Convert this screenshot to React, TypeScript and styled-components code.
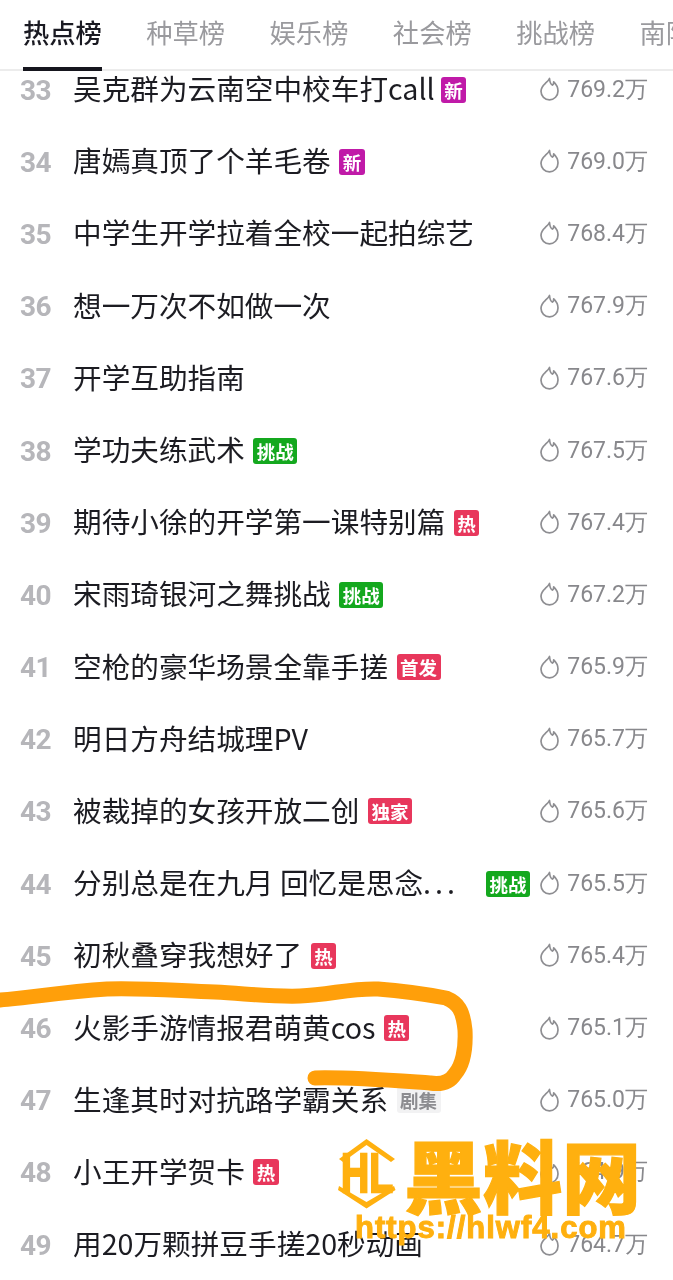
import React from "react";
import styled, { createGlobalStyle } from "styled-components";

const GlobalStyle = createGlobalStyle`
  html, body {
    margin: 0;
    padding: 0;
    background: #fff;
  }
  body {
    font-family: "Noto Sans CJK SC", "Noto Sans", sans-serif;
  }
`;

const Page = styled.div`
  position: relative;
  width: 673px;
  height: 1280px;
  overflow: hidden;
  background: #fff;
  filter: blur(0.35px);
`;

const Tabs = styled.div`
  position: relative;
  z-index: 2;
  display: flex;
  gap: 44.4px;
  height: 71px;
  padding-left: 23px;
  background: #fff;
  border-bottom: 2px solid #ececec;
  box-sizing: border-box;
  white-space: nowrap;
`;

const Tab = styled.div<{ $active?: boolean }>`
  position: relative;
  flex: none;
  padding-top: 12px;
  font-size: 26.3px;
  line-height: 40px;
  font-weight: ${(p) => (p.$active ? 500 : 400)};
  color: ${(p) => (p.$active ? "#1a1a22" : "#9a9a9e")};

  &::after {
    content: "";
    display: ${(p) => (p.$active ? "block" : "none")};
    position: absolute;
    left: 0;
    right: 0;
    bottom: -2px;
    height: 4px;
    background: #16161e;
  }
`;

const List = styled.div`
  margin-top: -19px;
`;

const Row = styled.div`
  display: flex;
  align-items: center;
  height: 72.2px;
  padding-right: 25px;
`;

const Rank = styled.div`
  flex: none;
  width: 73px;
  padding: 4px 2px 0 0;
  box-sizing: border-box;
  text-align: center;
  font-family: "Roboto", sans-serif;
  font-size: 28px;
  font-weight: 700;
  letter-spacing: -0.5px;
  color: #b6b6ba;
`;

const Title = styled.div`
  flex: none;
  font-size: 28.65px;
  line-height: 40px;
  color: #1c1c22;
  white-space: nowrap;
`;

const Dots = styled.span`
  letter-spacing: 4px;
`;

const tagColors = {
  purple: { bg: "#c01aa8", fg: "#fff" },
  red: { bg: "#e8375c", fg: "#fff" },
  green: { bg: "#14a81e", fg: "#fff" },
  gray: { bg: "#f2f2f3", fg: "#8c8c90" },
};

const Tag = styled.span<{ $color: keyof typeof tagColors; $gap?: number }>`
  flex: none;
  display: flex;
  align-items: center;
  justify-content: center;
  height: 26px;
  margin: 3px 0 0 ${(p) => p.$gap ?? 8.5}px;
  padding: 0 3.5px;
  border-radius: 3px;
  font-size: 18.5px;
  font-weight: 700;
  line-height: 26px;
  background: ${(p) => tagColors[p.$color].bg};
  color: ${(p) => tagColors[p.$color].fg};
`;

const Hot = styled.div`
  display: flex;
  align-items: center;
  margin-left: auto;
  padding-top: 2px;
  font-family: "Roboto", sans-serif;
  font-size: 23px;
  color: #88888c;
`;

const Flame = styled.svg`
  flex: none;
  width: 19px;
  height: 24px;
  margin-right: 8px;
`;

const Scribble = styled.svg`
  position: absolute;
  z-index: 3;
  left: 0;
  top: 0;
  pointer-events: none;
`;

const Watermark = styled.div`
  position: absolute;
  z-index: 4;
  left: 338px;
  top: 1134px;
  width: 310px;
  color: #ffb00f;
`;

const BrandRow = styled.div`
  display: flex;
  align-items: center;
  height: 80px;
`;

const BrandLogo = styled.svg`
  flex: none;
  width: 58px;
  height: 70px;
  margin-right: 8px;
`;

const BrandName = styled.div`
  font-size: 79px;
  line-height: 80px;
  font-weight: 900;
  white-space: nowrap;
  -webkit-text-stroke: 1.2px #ffb00f;
`;

const BrandUrl = styled.div`
  margin: -3px 0 0 17px;
  font-family: "Liberation Sans", sans-serif;
  font-size: 31px;
  line-height: 34px;
  font-weight: 700;
  letter-spacing: 1px;
  white-space: nowrap;
  -webkit-text-stroke: 1px #ffb00f;
`;

const tabs = ["热点榜", "种草榜", "娱乐榜", "社会榜", "挑战榜", "南阳榜"];

type TagKind = { text: string; color: keyof typeof tagColors; gap?: number };

const items: { rank: number; title: string; more?: boolean; hot: string; tag?: TagKind }[] = [
  { rank: 33, title: "吴克群为云南空中校车打call", hot: "769.2万", tag: { text: "新", color: "purple", gap: 6 } },
  { rank: 34, title: "唐嫣真顶了个羊毛卷", hot: "769.0万", tag: { text: "新", color: "purple" } },
  { rank: 35, title: "中学生开学拉着全校一起拍综艺", hot: "768.4万" },
  { rank: 36, title: "想一万次不如做一次", hot: "767.9万" },
  { rank: 37, title: "开学互助指南", hot: "767.6万" },
  { rank: 38, title: "学功夫练武术", hot: "767.5万", tag: { text: "挑战", color: "green" } },
  { rank: 39, title: "期待小徐的开学第一课特别篇", hot: "767.4万", tag: { text: "热", color: "red" } },
  { rank: 40, title: "宋雨琦银河之舞挑战", hot: "767.2万", tag: { text: "挑战", color: "green" } },
  { rank: 41, title: "空枪的豪华场景全靠手搓", hot: "765.9万", tag: { text: "首发", color: "red" } },
  { rank: 42, title: "明日方舟结城理PV", hot: "765.7万" },
  { rank: 43, title: "被裁掉的女孩开放二创", hot: "765.6万", tag: { text: "独家", color: "red" } },
  { rank: 44, title: "分别总是在九月 回忆是思念", more: true, hot: "765.5万", tag: { text: "挑战", color: "green", gap: 27 } },
  { rank: 45, title: "初秋叠穿我想好了", hot: "765.4万", tag: { text: "热", color: "red" } },
  { rank: 46, title: "火影手游情报君萌黄cos", hot: "765.1万", tag: { text: "热", color: "red" } },
  { rank: 47, title: "生逢其时对抗路学霸关系", hot: "765.0万", tag: { text: "剧集", color: "gray" } },
  { rank: 48, title: "小王开学贺卡", hot: "764.9万", tag: { text: "热", color: "red" } },
  { rank: 49, title: "用20万颗拼豆手搓20秒动画", hot: "764.7万" },
];

const FlameIcon = () => (
  <Flame viewBox="0 0 19 24" fill="none" stroke="#8e8e92" strokeWidth="1.7" strokeLinejoin="round" strokeLinecap="round">
    <path d="M9.500 1.500C9.800 4.800 10.800 7.400 12.300 8.100C13.400 7.700 13.800 6.300 13.700 4.800C16.300 7.200 18 10.400 18 14C18 19 14.300 22.800 9.500 22.800C4.700 22.800 1 19 1 14.300C1 10.500 3.200 8.300 5.400 6.300C7.200 4.700 8.800 3.300 9.500 1.500Z" />
  </Flame>
);

const App = () => {
  return (
    <Page>
      <GlobalStyle />
      <Tabs>
        {tabs.map((name, i) => (
          <Tab key={name} $active={i === 0}>
            {name}
          </Tab>
        ))}
      </Tabs>
      <List>
        {items.map((item) => (
          <Row key={item.rank}>
            <Rank>{item.rank}</Rank>
            <Title>
              {item.title}
              {item.more && <Dots>...</Dots>}
            </Title>
            {item.tag && (
              <Tag $color={item.tag.color} $gap={item.tag.gap}>
                {item.tag.text}
              </Tag>
            )}
            <Hot>
              <FlameIcon />
              {item.hot}
            </Hot>
          </Row>
        ))}
      </List>
      <Scribble width="673" height="1280" fill="none">
        <path
          d="M0 1000C30 998 60 992 107 989C150 988 180 991 215 992C250 994 275 997 300 996C330 995 350 988 378 989C405 991 430 995 446 998C458 1003 463 1010 465 1030C466 1050 462 1066 455 1074C450 1082 442 1085 430 1083C400 1081 350 1077 315 1078"
          stroke="#ff9f0a"
          strokeWidth="15"
          strokeLinecap="round"
          strokeLinejoin="round"
        />
      </Scribble>
      <Watermark>
        <BrandRow>
          <BrandLogo viewBox="0 0 58 70">
            <path d="M28.500 0L57 20L53 23L28.500 6L5 23L1 20z" fill="#ffb00f" />
            <path d="M1 47L28.500 63L56 47L57.500 51L28.500 69.500L0 51z" fill="#ffb00f" />
            <text
              x="3"
              y="53"
              fontFamily="Liberation Sans"
              fontWeight="700"
              fontSize="56"
              textLength="52"
              lengthAdjust="spacingAndGlyphs"
              fill="#ffb00f"
              stroke="#ffb00f"
              strokeWidth="2.5"
            >
              HL
            </text>
          </BrandLogo>
          <BrandName>黑料网</BrandName>
        </BrandRow>
        <BrandUrl>https://hlwf4.com</BrandUrl>
      </Watermark>
    </Page>
  );
};

export default App;
